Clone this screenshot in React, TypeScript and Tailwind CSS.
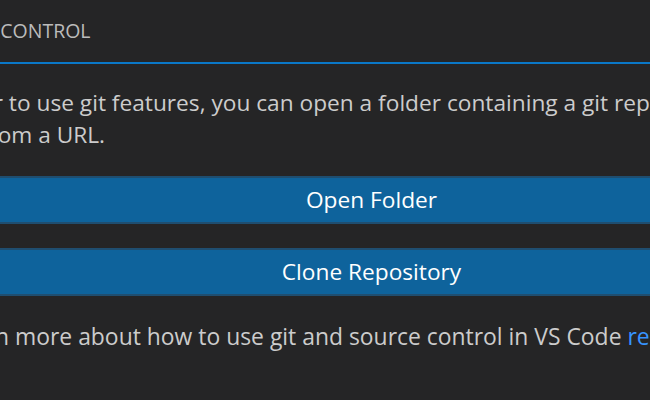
import React from "react";

export default function App() {
  return (
    <div
      className="w-[650px] h-[400px] overflow-hidden bg-[#252526] text-[#cccccc]"
      style={{ fontFamily: '"Open Sans", "Noto Sans", sans-serif' }}
    >
      <div className="h-[62px] flex items-center ml-[-80px] text-[19.5px] text-[#bbbbbb] whitespace-nowrap">
        SOURCE CONTROL
      </div>
      <div className="h-[2px] w-full bg-[#0a78c8]" />
      <div className="ml-[-82px] w-[907px] flex flex-col">
        <p className="mt-[23px] text-[22.7px] leading-[32px] whitespace-nowrap">
          In order to use git features, you can open a folder containing a git repository or
          <br />
          clone from a URL.
        </p>
        <button className="mt-[25px] h-[48px] w-full flex items-center justify-center bg-[#0e639c] border-2 border-[#1f4e70] text-white text-[22.7px]">
          Open Folder
        </button>
        <button className="mt-[24px] h-[48px] w-full flex items-center justify-center bg-[#0e639c] border-2 border-[#1f4e70] text-white text-[22.7px]">
          Clone Repository
        </button>
        <p className="mt-[25px] pl-[4px] text-[22.9px] leading-[32px] whitespace-nowrap">
          To learn more about how to use git and source control in VS Code{" "}
          <a className="text-[#3794ff]">read our docs</a>.
        </p>
      </div>
    </div>
  );
}
